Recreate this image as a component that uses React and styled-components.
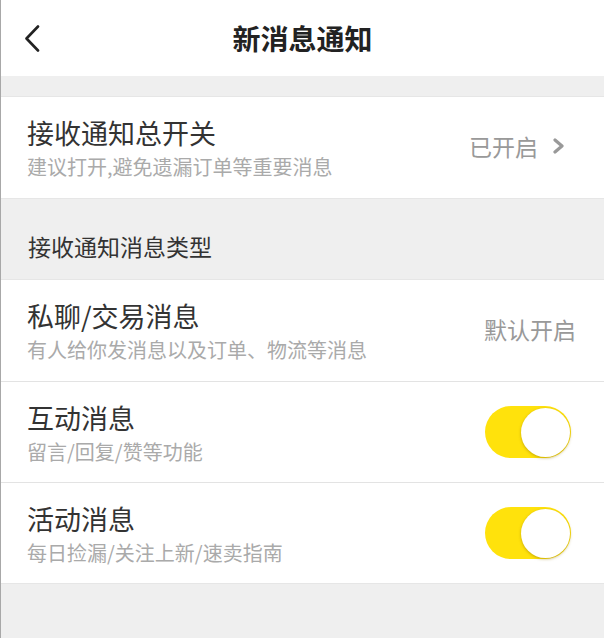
import React, { useState } from 'react'
import styled, { createGlobalStyle } from 'styled-components'

const GlobalStyle = createGlobalStyle`
    html, body {
        margin: 0;
        padding: 0;
        background: #efefef;
    }
    body {
        font-family: "Noto Sans CJK SC", "Noto Sans", sans-serif;
    }
`

const types = [
    { id: 'chat', title: '私聊/交易消息', desc: '有人给你发消息以及订单、物流等消息', fixed: true },
    { id: 'interact', title: '互动消息', desc: '留言/回复/赞等功能' },
    { id: 'activity', title: '活动消息', desc: '每日捡漏/关注上新/速卖指南' },
]

function Toggle({ on, onChange }) {
    return (
        <Switch type='button' $on={on} onClick={() => onChange(!on)}>
            <Knob $on={on} />
        </Switch>
    )
}

function App() {
    const [switches, setSwitches] = useState({ interact: true, activity: true })

    return (
        <>
            <GlobalStyle />
            <Page>
                <Header>
                    <BackBtn type='button'>
                        <svg width='16' height='27' viewBox='0 0 16 27'>
                            <path d='M14 1.5 L2.5 13.5 L14 25.5' fill='none' stroke='#222' strokeWidth='2.6' strokeLinecap='round' strokeLinejoin='round' />
                        </svg>
                    </BackBtn>
                    <Title>新消息通知</Title>
                    <span />
                </Header>

                <Group>
                    <Row>
                        <TextWrap>
                            <RowTitle>接收通知总开关</RowTitle>
                            <RowDesc>建议打开,避免遗漏订单等重要消息</RowDesc>
                        </TextWrap>
                        <RightInfo $arrow>
                            已开启
                            <svg width='13' height='16' viewBox='0 0 13 16'>
                                <path d='M3 2 L10 8 L3 14' fill='none' stroke='#999' strokeWidth='3.2' strokeLinecap='round' strokeLinejoin='round' />
                            </svg>
                        </RightInfo>
                    </Row>
                </Group>

                <SectionLabel>接收通知消息类型</SectionLabel>

                <Group>
                    {types.map((t) => (
                        <Row key={t.id}>
                            <TextWrap>
                                <RowTitle>{t.title}</RowTitle>
                                <RowDesc>{t.desc}</RowDesc>
                            </TextWrap>
                            {t.fixed ? (
                                <RightInfo>默认开启</RightInfo>
                            ) : (
                                <Toggle
                                    on={switches[t.id]}
                                    onChange={(v) => setSwitches({ ...switches, [t.id]: v })}
                                />
                            )}
                        </Row>
                    ))}
                </Group>
            </Page>
        </>
    )
}

const Page = styled.div`
    min-height: 100vh;
    background: #efefef;
    border-left: 1px solid #a8a8a8;
    box-sizing: border-box;
`

const Header = styled.header`
    height: 76px;
    background: #fff;
    display: grid;
    grid-template-columns: 1fr auto 1fr;
    align-items: center;
    margin-bottom: 20px;
`

const BackBtn = styled.button`
    justify-self: start;
    border: none;
    background: none;
    padding: 0 0 0 23px;
    display: flex;
    align-items: center;
    cursor: pointer;
`

const Title = styled.h1`
    margin: 0;
    font-size: 28px;
    font-weight: 700;
    color: #222;
    line-height: 1;
`

const Group = styled.section`
    background: #fff;
    border-top: 1px solid #e6e6e6;
    border-bottom: 1px solid #e6e6e6;
`

const Row = styled.div`
    display: flex;
    align-items: center;
    padding: 0 33px 0 26px;
    height: 101px;
    box-sizing: border-box;

    & + & {
        border-top: 1px solid #e3e3e3;
    }
`

const TextWrap = styled.div`
    display: flex;
    flex-direction: column;
    gap: 5px;
    margin-top: 2px;
`

const RowTitle = styled.div`
    font-size: 27px;
    line-height: 32px;
    color: #333;
`

const RowDesc = styled.div`
    font-size: 20px;
    line-height: 26px;
    color: #aaa;
`

const RightInfo = styled.div`
    margin-left: auto;
    margin-right: ${(p) => (p.$arrow ? '6px' : '-5px')};
    margin-top: -3px;
    display: flex;
    align-items: center;
    gap: 14px;
    font-size: 23px;
    color: #999;
`

const SectionLabel = styled.div`
    padding: 35px 27px 21px;
    font-size: 23px;
    line-height: 24px;
    color: #333;
`

const Switch = styled.button`
    margin-left: auto;
    width: 86px;
    height: 52px;
    border-radius: 26px;
    border: none;
    padding: 0;
    background: ${(p) => (p.$on ? '#ffe20c' : '#e5e5e5')};
    position: relative;
    cursor: pointer;
    flex-shrink: 0;
`

const Knob = styled.span`
    position: absolute;
    top: 1.5px;
    left: ${(p) => (p.$on ? '35.5px' : '1.5px')};
    width: 49px;
    height: 49px;
    border-radius: 50%;
    background: #fff;
    box-shadow: 0 1px 3px rgba(150, 120, 0, 0.55);
    transition: left 0.2s;
`

export default App
